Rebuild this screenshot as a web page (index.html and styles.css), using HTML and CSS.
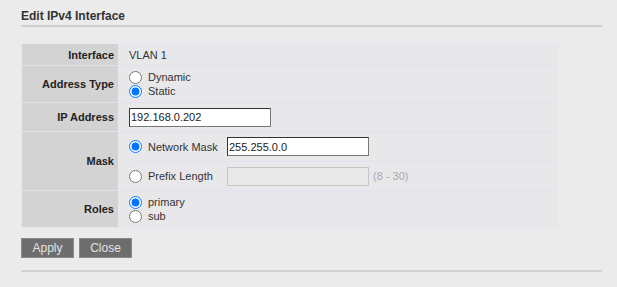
FILE: index.html
```html
<!DOCTYPE html>
<html lang="en">
<head>
  <meta charset="UTF-8" />
  <title>Edit IPv4 Interface</title>
  <link rel="stylesheet" href="styles.css">
</head>
<body>

<div id="page">
  <h2 class="title">Edit IPv4 Interface</h2>

  <div class="form-grid">
    <div class="lbl">Interface</div>
    <div class="val">VLAN 1</div>

    <div class="lbl">Address Type</div>
    <div class="val stack">
      <label class="opt"><input type="radio" name="atype" />Dynamic</label>
      <label class="opt"><input type="radio" name="atype" checked />Static</label>
    </div>

    <div class="lbl">IP Address</div>
    <div class="val">
      <input type="text" class="txt" value="192.168.0.202" />
    </div>

    <div class="lbl">Mask</div>
    <div class="val mask">
      <div class="sub">
        <label class="opt opt-wide"><input type="radio" name="mask" checked />Network Mask</label>
        <input type="text" class="txt" value="255.255.0.0" />
      </div>
      <div class="sub">
        <label class="opt opt-wide"><input type="radio" name="mask" />Prefix Length</label>
        <input type="text" class="txt" disabled />
        <span class="hint">(8 - 30)</span>
      </div>
    </div>

    <div class="lbl">Roles</div>
    <div class="val stack">
      <label class="opt"><input type="radio" name="role" checked />primary</label>
      <label class="opt"><input type="radio" name="role" />sub</label>
    </div>
  </div>

  <div id="buttonGroup">
    <button>Apply</button>
    <button>Close</button>
  </div>

  <div class="rule"></div>
</div>

</body>
</html>
```

FILE: styles.css
```css
body, html {
  margin: 0;
  background: #ebebeb;
  font-family: "Liberation Sans", Arial, sans-serif;
  font-size: 11px;
  color: #333;
}

#page {
  padding: 10px 0 0 21px;
  width: 581px;
}

.title {
  margin: 0;
  font-size: 12px;
  font-weight: bold;
  color: #333;
  line-height: 13px;
  padding-bottom: 2px;
  border-bottom: 2px solid #cecece;
}

.form-grid {
  display: grid;
  grid-template-columns: 96px 439px;
  grid-template-rows: 22px 37px 29px 59px 36px;
  width: 535px;
  margin-top: 16px;
  border: 1px solid #e6e6f2;
}

.lbl {
  background: #d3d3d3;
  font-weight: bold;
  color: #222;
  text-align: right;
  padding-right: 4px;
  display: flex;
  align-items: center;
  justify-content: flex-end;
  border-bottom: 1px solid #e2e2e2;
}

.val {
  background: #e8e8ea;
  padding-left: 11px;
  display: flex;
  align-items: center;
  border-bottom: 1px solid #e1e1f0;
}

.lbl:nth-last-child(2),
.val:last-child {
  border-bottom: none;
}

.stack {
  flex-direction: column;
  align-items: flex-start;
  justify-content: center;
}

.opt {
  display: flex;
  align-items: center;
  height: 14px;
}

.opt input {
  width: 13px;
  height: 13px;
  margin: 0 6px 0 0;
}

.opt-wide {
  width: 98px;
}

.mask {
  flex-direction: column;
  align-items: stretch;
}

.sub {
  display: flex;
  align-items: center;
  flex: 1;
}

.sub:first-child {
  border-bottom: 1px solid #e1e1f0;
  height: 29px;
  flex: none;
}

.txt {
  width: 142px;
  height: 19px;
  box-sizing: border-box;
  border: 1px solid #333;
  border-right-color: #777;
  border-bottom-color: #777;
  background: #fff;
  padding: 0 1px;
  font-family: "Liberation Sans", Arial, sans-serif;
  font-size: 11px;
  color: #222;
  outline: none;
}

.txt:disabled {
  background: #e9e9e9;
  border: 1px solid #c6c6c6;
}

.hint {
  color: #aaa;
  margin-left: 4px;
}

#buttonGroup {
  display: flex;
  gap: 5px;
  margin-top: 10px;
}

button {
  width: 53px;
  height: 20px;
  padding: 0;
  background: #6d6d6d;
  border: 1px solid #8a8a8a;
  color: #e2e2e2;
  font-family: "Liberation Sans", Arial, sans-serif;
  font-size: 12px;
  cursor: pointer;
}

.rule {
  margin-top: 12px;
  border-top: 2px solid #d2d2d2;
}
```
